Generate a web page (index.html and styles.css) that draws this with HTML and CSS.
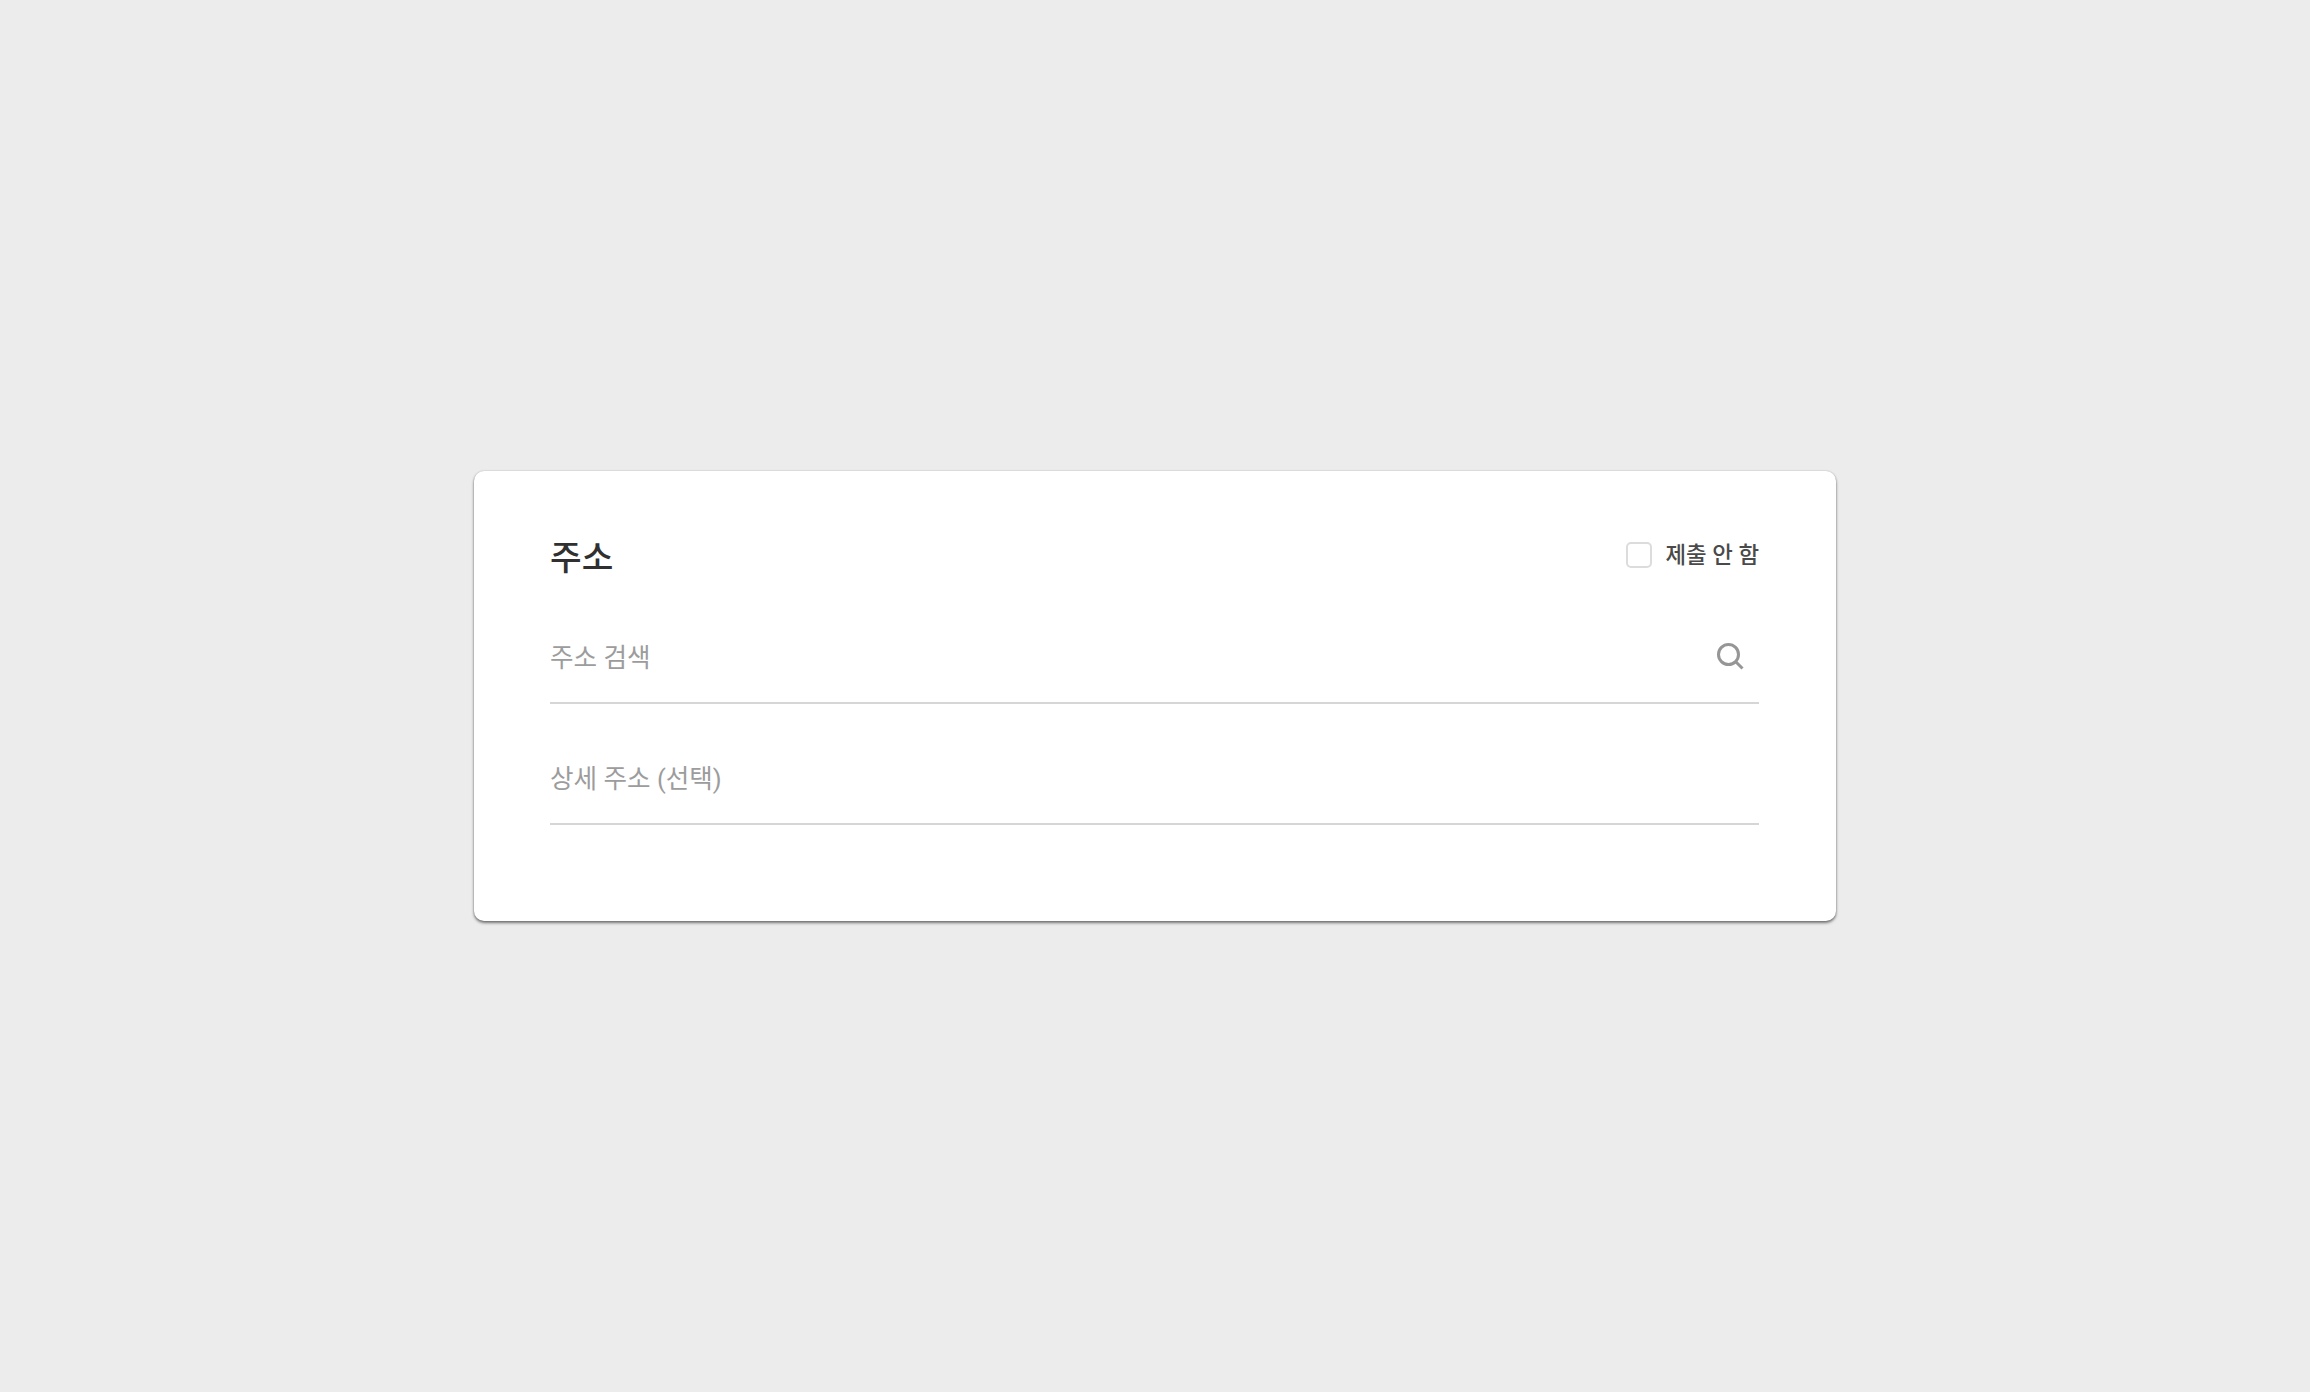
FILE: index.html
```html
<!DOCTYPE html>
<html lang="ko">
<head>
    <meta charset="UTF-8">
    <meta name="viewport" content="width=device-width, initial-scale=1.0">
    <title>주소</title>
    <link rel="stylesheet" href="styles.css">
</head>
<body>

    <div class="card">
        <div class="card-header">
            <h2>주소</h2>
            <label class="skip">
                <span class="skip-box"></span>
                <span class="skip-label">제출 안 함</span>
            </label>
        </div>

        <div class="field">
            <span class="placeholder">주소 검색</span>
            <svg class="search-icon" viewBox="0 0 30 30" width="30" height="30" aria-hidden="true">
                <circle cx="13.5" cy="13.5" r="10" fill="none" stroke="#969696" stroke-width="3"/>
                <path d="M21 21l6.5 6.5" fill="none" stroke="#969696" stroke-width="3"/>
            </svg>
        </div>

        <div class="field">
            <span class="placeholder">상세 주소 (선택)</span>
        </div>
    </div>

</body>
</html>
```

FILE: styles.css
```css
:root {
    --background-color: #ececec;
    --card-background: #ffffff;
    --title-color: #303030;
    --label-color: #4a4a4a;
    --placeholder-color: #9c9c9c;
    --line-color: #d6d6d6;
}

body {
    font-family: Roboto, 'Noto Sans CJK KR', sans-serif;
    margin: 0;
    min-height: 100vh;
    display: flex;
    justify-content: center;
    padding-top: 471px;
    box-sizing: border-box;
    background-color: var(--background-color);
}

.card {
    background-color: var(--card-background);
    border-radius: 10px;
    box-shadow: 0 2px 3px rgba(0, 0, 0, 0.5), 0 0 2px rgba(0, 0, 0, 0.2);
    box-sizing: border-box;
    width: 1362px;
    height: 450px;
    padding: 59px 77px 0 76px;
}

.card-header {
    display: flex;
    justify-content: space-between;
    align-items: center;
    height: 50px;
    margin-bottom: 39px;
}

.card-header h2 {
    margin: 0;
    font-size: 34.4px;
    font-weight: 500;
    color: var(--title-color);
}

.skip {
    display: flex;
    align-items: center;
    gap: 13px;
}

.skip-box {
    width: 26px;
    height: 26px;
    box-sizing: border-box;
    border: 2px solid #dcdcdc;
    border-radius: 5px;
}

.skip-label {
    font-size: 22.4px;
    font-weight: 500;
    color: var(--label-color);
    line-height: 26px;
}

.field {
    display: flex;
    justify-content: space-between;
    align-items: center;
    height: 72px;
    padding: 0 14px 11px 0;
    border-bottom: 2px solid var(--line-color);
    margin-bottom: 36px;
}

.placeholder {
    font-size: 25.6px;
    color: var(--placeholder-color);
}

.search-icon {
    display: block;
    margin-top: 2px;
}
```
